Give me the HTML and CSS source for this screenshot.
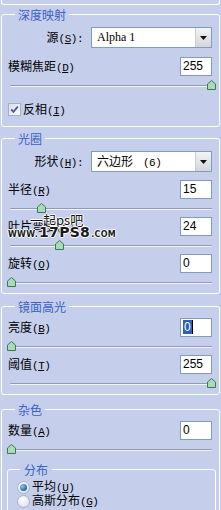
FILE: index.html
```html
<!DOCTYPE html>
<html lang="zh-CN">
<head>
<meta charset="utf-8">
<title>镜头模糊</title>
<link rel="stylesheet" href="styles.css">
</head>
<body>
<div class="panel">
  <div class="group-tail"></div>

  <fieldset class="group group-depth">
    <legend>深度映射</legend>
    <div class="row row-select">
      <label class="label-right">源<span class="acc">(<u>S</u>):</span></label>
      <div class="select">
        <span class="select-value serif">Alpha 1</span>
        <span class="select-btn"><svg width="7" height="4" viewBox="0 0 7 4"><path d="M0 0H7L3.5 4Z" fill="#111"/></svg></span>
      </div>
    </div>
    <div class="row">
      <label>模糊焦距<span class="acc">(<u>D</u>)</span></label>
      <div class="num">255</div>
    </div>
    <div class="slider"><div class="track"></div><div class="rail"><span class="thumb" style="left:100%"><svg width="9" height="10" viewBox="0 0 9 10"><path d="M4.5 .5L8.5 4V9.5H.5V4Z"/></svg></span></div></div>
    <div class="check-row">
      <span class="checkbox"><svg width="11" height="11" viewBox="0 0 11 11"><path d="M2.2 5.4L4.4 7.8L8.8 2.6" fill="none" stroke="#4d5d8c" stroke-width="1.8"/></svg></span>
      <span>反相<span class="acc">(<u>I</u>)</span></span>
    </div>
  </fieldset>

  <fieldset class="group group-iris">
    <legend>光圈</legend>
    <div class="row row-select">
      <label class="label-right">形状<span class="acc">(<u>H</u>):</span></label>
      <div class="select">
        <span class="select-value">六边形<span class="acc opt">(6)</span></span>
        <span class="select-btn"><svg width="7" height="4" viewBox="0 0 7 4"><path d="M0 0H7L3.5 4Z" fill="#111"/></svg></span>
      </div>
    </div>
    <div class="row">
      <label>半径<span class="acc">(<u>R</u>)</span></label>
      <div class="num">15</div>
    </div>
    <div class="slider"><div class="track"></div><div class="rail"><span class="thumb" style="left:15%"><svg width="9" height="10" viewBox="0 0 9 10"><path d="M4.5 .5L8.5 4V9.5H.5V4Z"/></svg></span></div></div>
    <div class="row row-wm">
      <label>叶片弯度<span class="acc">(<u>C</u>)</span></label>
      <div class="num">24</div>
      <div class="watermark">
        <div class="wm-top">一起ps吧</div>
        <div class="wm-url"><span class="wm-small">WWW.</span><span class="wm-big">17PS8</span><span class="wm-small">.COM</span></div>
      </div>
    </div>
    <div class="slider"><div class="track"></div><div class="rail"><span class="thumb" style="left:24%"><svg width="9" height="10" viewBox="0 0 9 10"><path d="M4.5 .5L8.5 4V9.5H.5V4Z"/></svg></span></div></div>
    <div class="row">
      <label>旋转<span class="acc">(<u>O</u>)</span></label>
      <div class="num">0</div>
    </div>
    <div class="slider"><div class="track"></div><div class="rail"><span class="thumb" style="left:0%"><svg width="9" height="10" viewBox="0 0 9 10"><path d="M4.5 .5L8.5 4V9.5H.5V4Z"/></svg></span></div></div>
  </fieldset>

  <fieldset class="group group-specular">
    <legend>镜面高光</legend>
    <div class="row">
      <label>亮度<span class="acc">(<u>B</u>)</span></label>
      <div class="num"><span class="sel">0</span></div>
    </div>
    <div class="slider"><div class="track"></div><div class="rail"><span class="thumb" style="left:0%"><svg width="9" height="10" viewBox="0 0 9 10"><path d="M4.5 .5L8.5 4V9.5H.5V4Z"/></svg></span></div></div>
    <div class="row">
      <label>阈值<span class="acc">(<u>T</u>)</span></label>
      <div class="num">255</div>
    </div>
    <div class="slider"><div class="track"></div><div class="rail"><span class="thumb" style="left:100%"><svg width="9" height="10" viewBox="0 0 9 10"><path d="M4.5 .5L8.5 4V9.5H.5V4Z"/></svg></span></div></div>
  </fieldset>

  <fieldset class="group group-noise">
    <legend>杂色</legend>
    <div class="row">
      <label>数量<span class="acc">(<u>A</u>)</span></label>
      <div class="num">0</div>
    </div>
    <div class="slider"><div class="track"></div><div class="rail"><span class="thumb" style="left:0%"><svg width="9" height="10" viewBox="0 0 9 10"><path d="M4.5 .5L8.5 4V9.5H.5V4Z"/></svg></span></div></div>
    <fieldset class="subgroup">
      <legend>分布</legend>
      <div class="radio-row"><span class="radio checked"></span><span>平均<span class="acc">(<u>U</u>)</span></span></div>
      <div class="radio-row"><span class="radio"></span><span>高斯分布<span class="acc">(<u>G</u>)</span></span></div>
    </fieldset>
  </fieldset>
</div>
</body>
</html>
```
FILE: styles.css
```css
html, body {
  margin: 0;
  padding: 0;
}
body {
  background: #c5cfec;
  color: #000;
  font-family: "Noto Sans CJK SC", "Noto Sans", sans-serif;
  font-size: 12px;
  line-height: 15px;
  width: 221px;
  overflow: hidden;
}
.panel {
  display: flex;
  flex-direction: column;
}
.group-tail {
  height: 4px;
  margin: 0 1px;
  border: 1px solid #fff;
  border-top: 0;
  border-radius: 0 0 3px 3px;
}
.group {
  margin: 5px 1px 0;
  padding: 4px 7px 5px 6px;
  border: 1px solid #fff;
  border-radius: 3px;
  min-width: 0;
}
.group-depth { margin-top: 2px; }
.group-iris { margin-top: 4px; }
.group-specular { margin-top: 5px; }
.group-noise { margin-top: 7px; padding-bottom: 20px; }
.group legend,
.subgroup legend {
  margin-left: 7px;
  padding: 0 3px;
  font-size: 12px;
  line-height: 15px;
  color: #3b5fc6;
}
.acc {
  font-family: "Liberation Mono", monospace;
  font-size: 11px;
  letter-spacing: -0.5px;
}
.row {
  display: flex;
  align-items: center;
  justify-content: space-between;
  height: 19px;
}
.slider + .row { margin-top: 3px; }
.row-select {
  justify-content: flex-start;
  height: 21px;
  margin-top: 1px;
}
.row-select + .row { margin-top: 8px; }
.group-depth .row-select + .row { margin-top: 9px; }
.label-right {
  width: 75px;
  text-align: right;
  white-space: nowrap;
}
.select {
  margin-left: 8px;
  flex: 1;
  height: 21px;
  box-sizing: border-box;
  border: 1px solid #7f9db9;
  background: #fff;
  display: flex;
  align-items: center;
}
.select-value {
  flex: 1;
  padding-left: 5px;
  white-space: nowrap;
}
.serif {
  font-family: "Liberation Serif", serif;
  font-size: 12px;
}
.opt { margin-left: 10px; }
.select-btn {
  width: 16px;
  height: 19px;
  box-sizing: border-box;
  border-left: 1px solid #c9ccd4;
  background: linear-gradient(#f4f4f6, #d2d5dc);
  display: flex;
  align-items: center;
  justify-content: center;
}
.num {
  width: 32px;
  height: 19px;
  box-sizing: border-box;
  border: 1px solid #7f9db9;
  background: #fff;
  font-family: "Liberation Sans", sans-serif;
  font-size: 12px;
  line-height: 17px;
  padding-left: 2px;
}
.sel {
  display: inline-block;
  background: #2f5fbd;
  color: #fff;
  padding: 0 1px;
  line-height: 14px;
  margin-top: 1px;
  border-right: 1px solid #000;
  vertical-align: top;
}
.slider {
  position: relative;
  box-sizing: border-box;
  height: 11px;
  padding-top: 5px;
  margin: 4px 0 0 2px;
}
.track {
  height: 1px;
  background: #8f9ab8;
  border-bottom: 1px solid #f2f4fa;
  border-radius: 1px;
}
.rail {
  position: absolute;
  top: 0;
  bottom: 0;
  left: 1px;
  right: 1px;
}
.thumb {
  position: absolute;
  top: 0;
  width: 9px;
  height: 10px;
  margin-left: -4px;
}
.thumb svg {
  display: block;
}
.thumb path {
  fill: #a9dbb9;
  stroke: #3b7a55;
  stroke-width: 1;
}
.check-row {
  display: flex;
  align-items: center;
  height: 13px;
  margin: 12px 0 5px;
  gap: 2px;
}
.checkbox {
  width: 13px;
  height: 13px;
  box-sizing: border-box;
  border: 1px solid #a3afca;
  background: linear-gradient(135deg, #d9dde8, #fbfcff);
  display: flex;
  align-items: center;
  justify-content: center;
}
.checkbox svg { display: block; }
.subgroup {
  margin: 7px -4px 0 -1px;
  padding: 3px 6px 20px 9px;
  border: 1px solid #fff;
  border-radius: 3px;
  min-width: 0;
}
.subgroup legend { margin-left: 3px; padding: 0 4px; }
.radio-row {
  display: flex;
  align-items: center;
  height: 14px;
  gap: 2px;
}
.radio {
  width: 13px;
  height: 13px;
  box-sizing: border-box;
  border-radius: 50%;
  border: 1px solid #aab4ca;
  background: radial-gradient(circle at 40% 35%, #ffffff, #d4d9e4);
  display: flex;
  align-items: center;
  justify-content: center;
}
.radio.checked::after {
  content: "";
  width: 7px;
  height: 7px;
  border-radius: 50%;
  background: radial-gradient(circle at 35% 35%, #8fc4ea, #1f5f9c 75%);
}
.row-wm {
  position: relative;
}
.watermark {
  position: absolute;
  left: 0;
  top: -4px;
  pointer-events: none;
}
.wm-top {
  margin-left: 22px;
  font-size: 13px;
  line-height: 14px;
  color: #111;
  text-shadow: 1px 0 #fff, -1px 0 #fff, 0 1px #fff, 0 -1px #fff;
}
.wm-url {
  display: flex;
  align-items: baseline;
  font-family: "DejaVu Sans", sans-serif;
  font-weight: bold;
  line-height: 11px;
  color: #1a1a1a;
  text-shadow: 1px 0 #fff, -1px 0 #fff, 0 1px #fff, 0 -1px #fff;
}
.wm-small {
  font-size: 8px;
  letter-spacing: 0.3px;
}
.wm-big {
  font-size: 14px;
  letter-spacing: 0.3px;
  margin: 0 1px;
}
```
